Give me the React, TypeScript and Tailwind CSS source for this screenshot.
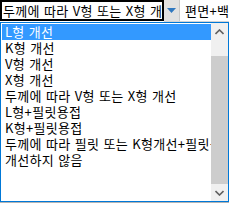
import React from "react";

const items = [
  "L형 개선",
  "K형 개선",
  "V형 개선",
  "X형 개선",
  "두께에 따라 V형 또는 X형 개선",
  "L형+필릿용접",
  "K형+필릿용접",
  "두께에 따라 필릿 또는 K형개선+필릿용접",
  "개선하지 않음",
];

export default function App() {
  return (
    <div
      className="w-[229px] h-[203px] bg-white overflow-hidden flex flex-col text-[13px] tracking-[0.3px] [word-spacing:1px] text-black"
      style={{ fontFamily: '"Noto Sans CJK KR", "Noto Sans", sans-serif' }}
    >
      {/* top row */}
      <div className="flex h-[22px] shrink-0">
        <div className="w-[164px] min-w-0 h-[21px] border-2 border-black flex items-center pl-[1px] overflow-hidden whitespace-nowrap leading-[16px]">
          두께에 따라 V형 또는 X형 개선
        </div>
        <div className="flex flex-col flex-1 min-w-0">
          <div className="flex h-[21px]">
            <div className="w-[15px] bg-[#e1e1e1] flex items-center justify-center">
              <svg width="9" height="5" viewBox="0 0 9 5">
                <path d="M0 0 H9 L4.5 5 Z" fill="#2f78c0" />
              </svg>
            </div>
            <div className="w-px bg-[#c8c8c8]" />
            <div className="flex-1 min-w-0 flex items-center pl-[5px] whitespace-nowrap overflow-hidden leading-[16px]">
              편면+백
            </div>
          </div>
          <div className="h-px bg-[#d4d4d4]" />
        </div>
      </div>
      {/* list */}
      <div className="h-[180px] shrink-0 border border-[#0078d7] flex bg-white">
        <div className="flex-1 min-w-0 pt-px pl-px overflow-hidden">
          {items.map((t, i) => (
            <div
              key={i}
              className={`h-[16px] leading-[16px] pl-[3px] whitespace-nowrap overflow-hidden ${
                i === 0 ? "bg-[#3399ff] text-white" : ""
              }`}
            >
              {t}
            </div>
          ))}
        </div>
        <div className="w-[17px] shrink-0 bg-[#f0f0f0] flex flex-col">
          <div className="h-[17px] flex items-center justify-center">
            <svg width="9" height="6" viewBox="0 0 9 6">
              <path d="M0.5 5 L4.5 1 L8.5 5" stroke="#606060" strokeWidth="1.6" fill="none" />
            </svg>
          </div>
          <div className="h-[16px]" />
          <div className="flex-1 bg-[#cdcdcd]" />
          <div className="h-[17px] flex items-center justify-center">
            <svg width="9" height="6" viewBox="0 0 9 6">
              <path d="M0.5 1 L4.5 5 L8.5 1" stroke="#606060" strokeWidth="1.6" fill="none" />
            </svg>
          </div>
        </div>
      </div>
      <div className="h-px bg-[#b4b4b4]" />
    </div>
  );
}
